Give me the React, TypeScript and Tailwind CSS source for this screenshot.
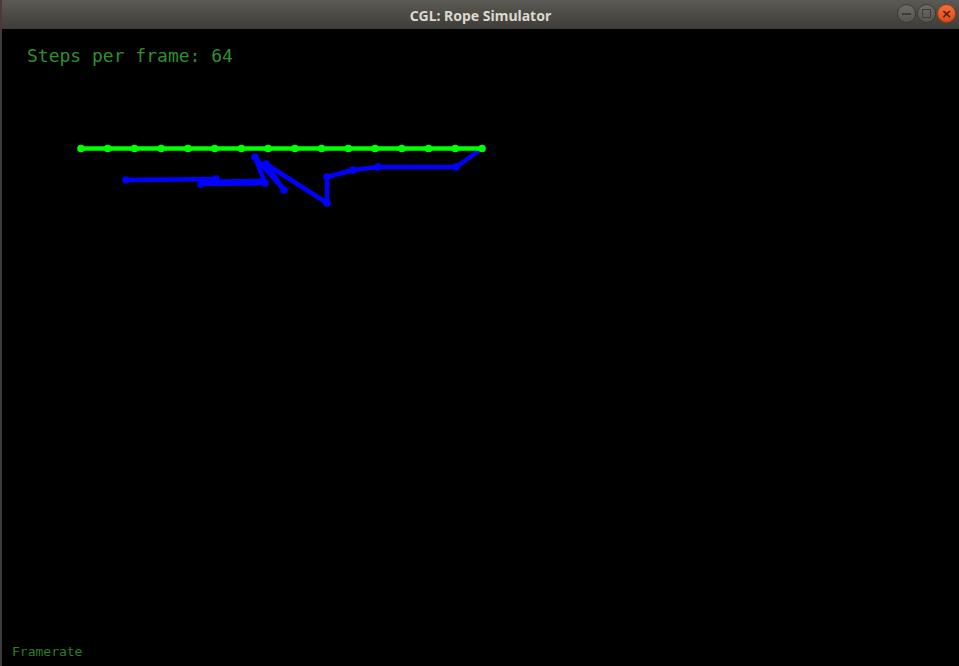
import React from "react";

const green: [number, number][] = Array.from({ length: 16 }, (_, i) => [81 + (401 / 15) * i, 148.5]);
const blue: [number, number][] = [
  [482, 148.5],
  [456, 167],
  [378, 167],
  [353, 170],
  [327, 177],
  [327, 203],
  [266, 164],
  [284, 190],
  [255, 157],
  [265, 183],
  [201, 184],
  [216, 179],
  [126, 180],
];

function Rope({ pts, color }: { pts: [number, number][]; color: string }) {
  return (
    <g>
      <polyline
        points={pts.map((p) => p.join(",")).join(" ")}
        fill="none"
        stroke={color}
        strokeWidth={4.5}
        strokeLinejoin="round"
        strokeLinecap="round"
      />
      {pts.map((p, i) => (
        <circle key={i} cx={p[0]} cy={p[1]} r={3.8} fill={color} />
      ))}
    </g>
  );
}

export default function App() {
  return (
    <div className="w-[959px] h-[666px] flex flex-col bg-black overflow-hidden">
      <div className="h-[29px] shrink-0 flex items-center relative bg-gradient-to-b from-[#5b5a54] to-[#3d3c38] border-l-2 border-[#4a3a3e]">
        <div className="flex-1 text-center text-[14px] font-bold text-[#dcd8cf] [font-family:'Noto_Sans','DejaVu_Sans',sans-serif] pt-[1px]">
          CGL: Rope Simulator
        </div>
        <div className="absolute right-[3px] top-[4px] flex gap-[1px]">
          <div className="w-[19px] h-[19px] rounded-full bg-gradient-to-b from-[#6c6b66] to-[#55544f] border border-[#3a3935] flex items-center justify-center">
            <div className="w-[9px] h-[2px] bg-[#3c3b37]" />
          </div>
          <div className="w-[19px] h-[19px] rounded-full bg-gradient-to-b from-[#6c6b66] to-[#55544f] border border-[#3a3935] flex items-center justify-center">
            <div className="w-[9px] h-[9px] border-[1.5px] border-[#3c3b37]" />
          </div>
          <div className="w-[19px] h-[19px] rounded-full bg-gradient-to-b from-[#f4703a] to-[#df4a16] border border-[#9c3a14] flex items-center justify-center text-[#4a2010] text-[13px] leading-none font-bold [font-family:'DejaVu_Sans',sans-serif]">
            ×
          </div>
        </div>
      </div>
      <div className="flex-1 relative flex flex-col border-l-2 border-[#3e393a]">
        <div className="pl-[25px] pt-[16px] text-[18px] leading-[22px] text-[#2f8f2f] [font-family:'DejaVu_Sans_Mono',monospace]">
          Steps per frame: 64
        </div>
        <div className="mt-auto pl-[10px] pb-[6px] text-[13px] leading-[16px] text-[#2a7d2a] [font-family:'DejaVu_Sans_Mono',monospace]">
          Framerate
        </div>
        <svg className="absolute left-[-2px] top-[-29px]" width={959} height={666}>
          <Rope pts={blue} color="#0000ff" />
          <polyline points="205,182 266,181" fill="none" stroke="#0000ff" strokeWidth={5} />
          <Rope pts={green} color="#00ff00" />
        </svg>
      </div>
    </div>
  );
}
